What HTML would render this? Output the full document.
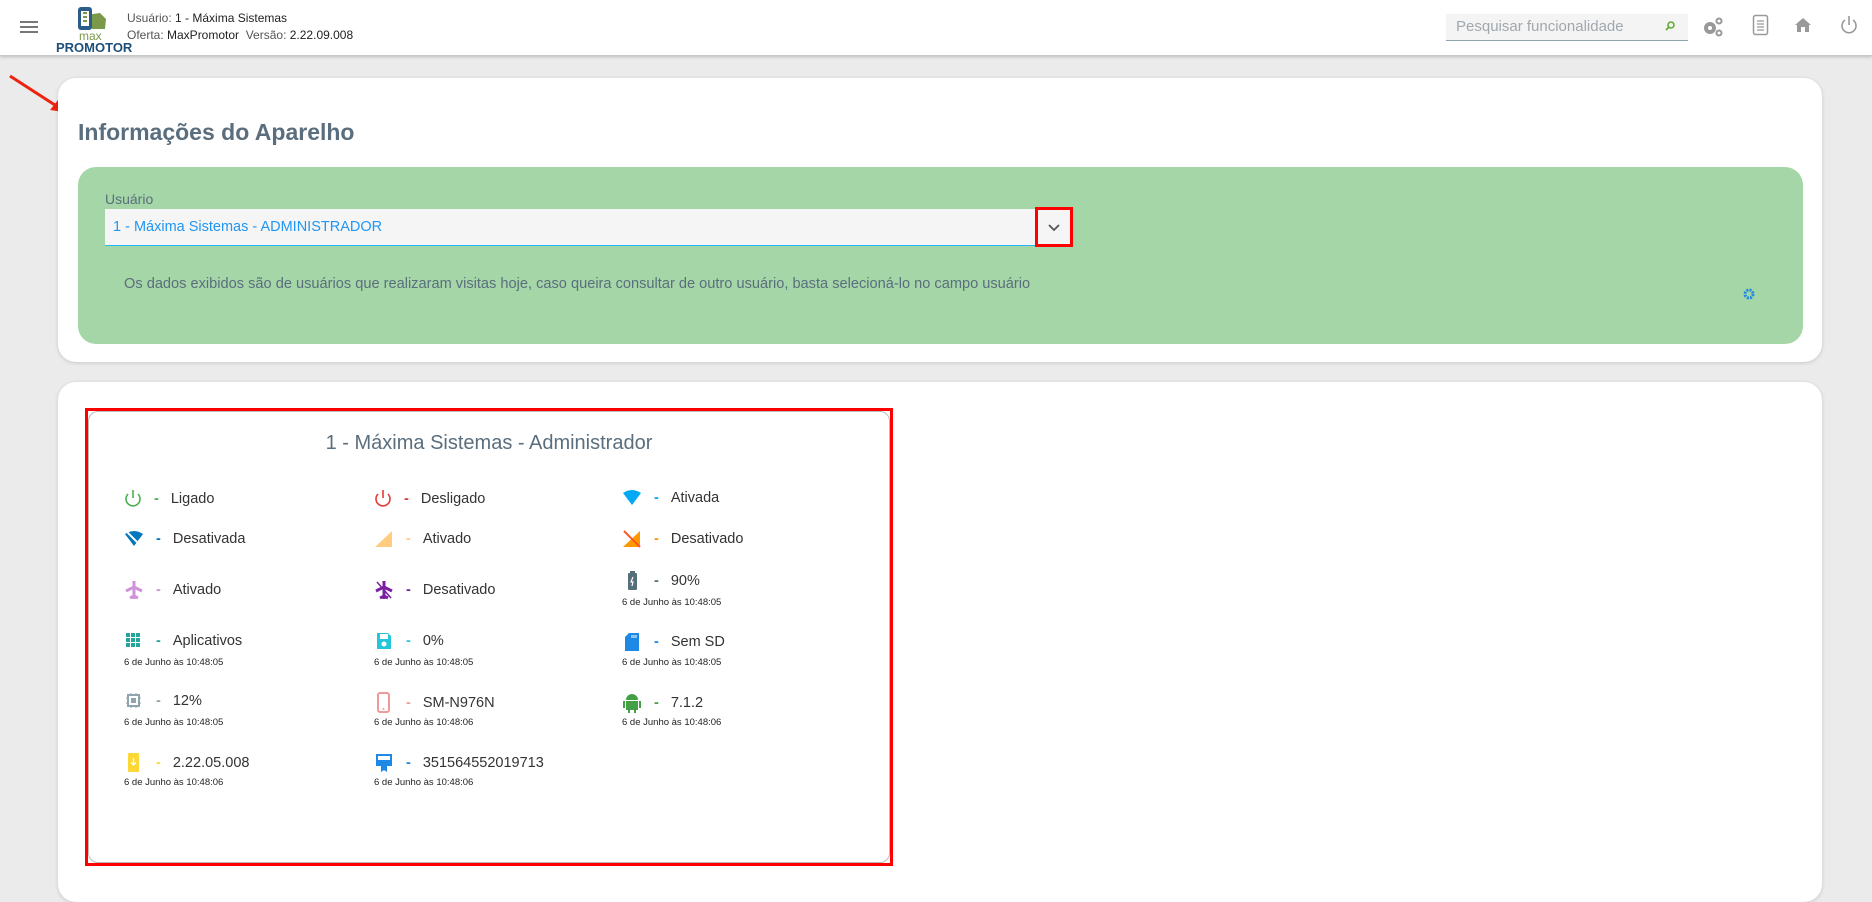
<!DOCTYPE html>
<html><head><meta charset="utf-8"><style>
*{box-sizing:border-box;margin:0;padding:0}
body{width:1872px;height:877px;overflow:hidden;background:#ebebeb;font-family:"Liberation Sans",sans-serif;position:relative;color:#333}
.hdr{position:absolute;left:0;top:0;width:1872px;height:56px;background:#fff;border-bottom:1px solid #c8c8c8;box-shadow:0 1px 3px rgba(0,0,0,.2)}
.abs{position:absolute}
.card{position:absolute;background:#fff;border-radius:18px;box-shadow:0 1px 4px rgba(0,0,0,.15)}
.it{position:absolute;font-size:14.5px;color:#333;display:flex;align-items:center;white-space:nowrap}
.it svg{margin-right:12px}
.dash{margin-right:12px;font-weight:bold}
.dt{position:absolute;font-size:9.5px;color:#222;white-space:nowrap}
</style></head><body>
<div class="hdr">
 <div class="abs" style="left:20px;top:21px;width:18px;height:2px;background:#777;box-shadow:0 5px 0 #777,0 10px 0 #777"></div>
 <svg class="abs" style="left:72px;top:5px" width="36" height="28" viewBox="0 0 36 28"><path d="M14 10 L28 8 L34 14 L33 24 L20 24 Z" fill="#7a9a4a"/><rect x="6" y="2" width="14" height="23" rx="3" fill="#2a5d8a"/><rect x="9" y="6" width="8" height="15" fill="#fff"/><path d="M11 8h4M11 12h4M11 16h4" stroke="#7a9a4a" stroke-width="2"/></svg>
 <div class="abs" style="left:79px;top:30px;font-size:12px;color:#7a9a4a;line-height:12px">max</div>
 <div class="abs" style="left:56px;top:41px;font-size:13px;font-weight:bold;color:#1e4f7a;line-height:13px">PROMOTOR</div>
 <div class="abs" style="left:127px;top:10px;font-size:12px;color:#555;line-height:17px">Usuário: <span style="color:#222">1 - Máxima Sistemas</span><br>Oferta: <span style="color:#222">MaxPromotor</span> &nbsp;Versão: <span style="color:#222">2.22.09.008</span></div>
 <div class="abs" style="left:1446px;top:14px;width:242px;height:27px;background:#f4f4f4;border-bottom:1px solid #90a4ae;font-size:15px;color:#a0a8ae;padding:4px 10px">Pesquisar funcionalidade</div>
 <svg class="abs" style="left:1665px;top:21px" width="10" height="10"><circle cx="6" cy="4" r="3" fill="none" stroke="#6a3" stroke-width="1.6"/><path d="M4 6 L1 9" stroke="#6a3" stroke-width="1.8"/></svg>
 <svg class="abs" style="left:1702px;top:16px" width="22" height="22" viewBox="0 0 22 22"><circle cx="8" cy="12" r="4" fill="none" stroke="#999" stroke-width="4"/><circle cx="8" cy="12" r="1.5" fill="#fff"/><circle cx="17" cy="5" r="2.5" fill="none" stroke="#999" stroke-width="2"/><circle cx="17" cy="17" r="2.5" fill="none" stroke="#999" stroke-width="2"/></svg>
 <svg class="abs" style="left:1752px;top:14px" width="17" height="22"><rect x="1.5" y="1.5" width="14" height="19" rx="2" fill="none" stroke="#999" stroke-width="1.5"/><path d="M5 7h7M5 10h7M5 13h7M5 16h7" stroke="#999" stroke-width="1.2"/></svg>
 <svg class="abs" style="left:1794px;top:17px" width="18" height="16"><path d="M9 1 L17 8 H15 V15 H11 V10 H7 V15 H3 V8 H1 Z" fill="#999"/></svg>
 <svg class="abs" style="left:1840px;top:15px" width="18" height="20"><path d="M5 5 A7 7 0 1 0 13 5" fill="none" stroke="#999" stroke-width="1.6"/><path d="M9 1 V10" stroke="#999" stroke-width="1.6"/></svg>
</div>
<svg class="abs" style="left:8px;top:74px" width="60" height="42"><path d="M2 2 L50 33" stroke="#e21" stroke-width="3"/><path d="M56 38 L42 36 L50 26 Z" fill="#e21"/></svg>
<div class="card" style="left:58px;top:78px;width:1764px;height:284px"></div>
<div class="abs" style="left:78px;top:119px;font-size:23px;font-weight:bold;color:#5a6e7d">Informações do Aparelho</div>
<div class="abs" style="left:78px;top:167px;width:1725px;height:177px;background:#a5d6a7;border-radius:18px"></div>
<div class="abs" style="left:105px;top:191px;font-size:14px;color:#5a6e7d">Usuário</div>
<div class="abs" style="left:105px;top:209px;width:930px;height:37px;background:#f5f5f5;border-bottom:1.5px solid #29b6f6;font-size:14.5px;color:#2196f3;padding:10px 8px">1 - Máxima Sistemas - ADMINISTRADOR</div>
<div class="abs" style="left:1035px;top:207px;width:38px;height:40px;border:3px solid #f00;background:#f5f5f5"></div>
<svg class="abs" style="left:1048px;top:224px" width="12" height="8"><path d="M1 1 L6 6 L11 1" fill="none" stroke="#555" stroke-width="1.8"/></svg>
<div class="abs" style="left:124px;top:276px;font-size:14.6px;color:#5a6e7d">Os dados exibidos são de usuários que realizaram visitas hoje, caso queira consultar de outro usuário, basta selecioná-lo no campo usuário</div>
<svg class="abs" style="left:1743px;top:288px" width="12" height="12" viewBox="0 0 12 12"><circle cx="6" cy="6" r="4" fill="none" stroke="#1e88e5" stroke-width="3" stroke-dasharray="2 1.2"/><circle cx="6" cy="6" r="1.5" fill="#a5d6a7"/></svg>
<div class="card" style="left:58px;top:382px;width:1764px;height:520px"></div>
<div class="abs" style="left:85px;top:408px;width:808px;height:458px;border:3px solid #f00"></div>
<div class="abs" style="left:88px;top:411px;width:802px;height:452px;border:1px solid #bbb;border-radius:10px"></div>
<div class="abs" style="left:88px;top:432px;width:802px;text-align:center;font-size:20px;color:#5a6e7d">1 - Máxima Sistemas - Administrador</div>

<div class="it" style="left:124px;top:489px"><svg width="18" height="20"><path d="M4 5 A7 7 0 1 0 14 5" fill="none" stroke="#4caf50" stroke-width="1.6"/><path d="M9 1V9" stroke="#4caf50" stroke-width="1.6"/></svg><span class="dash" style="color:#4caf50">-</span>Ligado</div>
<div class="it" style="left:374px;top:489px"><svg width="18" height="20"><path d="M4 5 A7 7 0 1 0 14 5" fill="none" stroke="#e53935" stroke-width="1.6"/><path d="M9 1V9" stroke="#e53935" stroke-width="1.6"/></svg><span class="dash" style="color:#e53935">-</span>Desligado</div>
<div class="it" style="left:622px;top:489px"><svg width="20" height="18"><path d="M1 4 Q10 -2 19 4 L10 16 Z" fill="#03a9f4"/></svg><span class="dash" style="color:#03a9f4">-</span>Ativada</div>

<div class="it" style="left:124px;top:530px"><svg width="20" height="18"><path d="M1 4 Q10 -2 19 4 L10 16 Z" fill="#0277bd"/><path d="M2 1 L18 17" stroke="#fff" stroke-width="2"/></svg><span class="dash" style="color:#0277bd">-</span>Desativada</div>
<div class="it" style="left:374px;top:530px"><svg width="20" height="18"><path d="M18 1 V17 H1 Z" fill="#ffcc80"/></svg><span class="dash" style="color:#ffcc80">-</span>Ativado</div>
<div class="it" style="left:622px;top:530px"><svg width="20" height="18"><path d="M18 1 V17 H1 Z" fill="#ff9800"/><path d="M2 1 L18 17" stroke="#ff5722" stroke-width="2"/></svg><span class="dash" style="color:#ff9800">-</span>Desativado</div>

<div class="it" style="left:124px;top:580px"><svg width="20" height="20"><path d="M10 1 V19 M2 11 L10 7 L18 11 M6 18 L10 16 L14 18" stroke="#ce93d8" stroke-width="3" fill="none"/></svg><span class="dash" style="color:#ce93d8">-</span>Ativado</div>
<div class="it" style="left:374px;top:580px"><svg width="20" height="20"><path d="M10 1 V19 M2 11 L10 7 L18 11 M6 18 L10 16 L14 18" stroke="#7b1fa2" stroke-width="3" fill="none"/><path d="M3 2 L17 18" stroke="#7b1fa2" stroke-width="1.5"/></svg><span class="dash" style="color:#7b1fa2">-</span>Desativado</div>
<div class="it" style="left:622px;top:570px"><svg width="20" height="22"><rect x="6" y="3" width="9" height="17" rx="1" fill="#546e7a"/><rect x="8" y="1" width="5" height="3" fill="#546e7a"/><path d="M11 7 L9 12 H11 L10 16" stroke="#fff" stroke-width="1.2" fill="none"/></svg><span class="dash" style="color:#546e7a">-</span>90%</div>
<div class="dt" style="left:622px;top:597px">6 de Junho às 10:48:05</div>

<div class="it" style="left:124px;top:632px"><svg width="20" height="18"><g fill="#26a69a"><rect x="2" y="1" width="4" height="4"/><rect x="7" y="1" width="4" height="4"/><rect x="12" y="1" width="4" height="4"/><rect x="2" y="6" width="4" height="4"/><rect x="7" y="6" width="4" height="4"/><rect x="12" y="6" width="4" height="4"/><rect x="2" y="11" width="4" height="4"/><rect x="7" y="11" width="4" height="4"/><rect x="12" y="11" width="4" height="4"/></g></svg><span class="dash" style="color:#26a69a">-</span>Aplicativos</div>
<div class="dt" style="left:124px;top:657px">6 de Junho às 10:48:05</div>
<div class="it" style="left:374px;top:632px"><svg width="20" height="18"><path d="M3 1 H14 L17 4 V17 H3 Z" fill="#26c6da"/><rect x="6" y="2" width="8" height="5" fill="#fff"/><circle cx="10" cy="12" r="2.5" fill="#fff"/></svg><span class="dash" style="color:#26c6da">-</span>0%</div>
<div class="dt" style="left:374px;top:657px">6 de Junho às 10:48:05</div>
<div class="it" style="left:622px;top:632px"><svg width="20" height="20"><path d="M7 1 H17 V19 H3 V5 Z" fill="#1e88e5"/><path d="M10 3V6M12 3V6M14 3V6" stroke="#fff"/></svg><span class="dash" style="color:#1e88e5">-</span>Sem SD</div>
<div class="dt" style="left:622px;top:657px">6 de Junho às 10:48:05</div>

<div class="it" style="left:124px;top:692px"><svg width="20" height="18"><rect x="4" y="3" width="11" height="11" fill="none" stroke="#90a4ae" stroke-width="2"/><rect x="7" y="6" width="5" height="5" fill="#90a4ae"/><path d="M7 1V3M12 1V3M7 14V16M12 14V16M2 6H4M2 11H4M15 6H17M15 11H17" stroke="#90a4ae"/></svg><span class="dash" style="color:#90a4ae">-</span>12%</div>
<div class="dt" style="left:124px;top:717px">6 de Junho às 10:48:05</div>
<div class="it" style="left:374px;top:692px"><svg width="20" height="22"><rect x="4" y="1" width="11" height="19" rx="2" fill="none" stroke="#ef9a9a" stroke-width="2"/><circle cx="9.5" cy="17" r="1" fill="#ef9a9a"/></svg><span class="dash" style="color:#ef9a9a">-</span>SM-N976N</div>
<div class="dt" style="left:374px;top:717px">6 de Junho às 10:48:06</div>
<div class="it" style="left:622px;top:692px"><svg width="20" height="22"><path d="M4 8 A6 6 0 0 1 16 8 Z" fill="#43a047"/><rect x="4" y="9" width="12" height="9" fill="#43a047"/><rect x="1" y="9" width="2" height="7" fill="#43a047"/><rect x="17" y="9" width="2" height="7" fill="#43a047"/><rect x="6" y="17" width="2" height="4" fill="#43a047"/><rect x="12" y="17" width="2" height="4" fill="#43a047"/></svg><span class="dash" style="color:#43a047">-</span>7.1.2</div>
<div class="dt" style="left:622px;top:717px">6 de Junho às 10:48:06</div>

<div class="it" style="left:124px;top:752px"><svg width="20" height="22"><rect x="4" y="1" width="11" height="19" rx="1" fill="#fdd835"/><path d="M9.5 6V13M7 10.5L9.5 13L12 10.5" stroke="#fff" stroke-width="1.3" fill="none"/></svg><span class="dash" style="color:#fdd835">-</span>2.22.05.008</div>
<div class="dt" style="left:124px;top:777px">6 de Junho às 10:48:06</div>
<div class="it" style="left:374px;top:752px"><svg width="20" height="22"><rect x="2" y="2" width="16" height="12" fill="#1e88e5"/><rect x="4" y="4" width="12" height="4" fill="#fff"/><path d="M7 14 V20 L10 18 L13 20 V14" fill="#1e88e5"/></svg><span class="dash" style="color:#1e88e5">-</span>351564552019713</div>
<div class="dt" style="left:374px;top:777px">6 de Junho às 10:48:06</div>
</body></html>
